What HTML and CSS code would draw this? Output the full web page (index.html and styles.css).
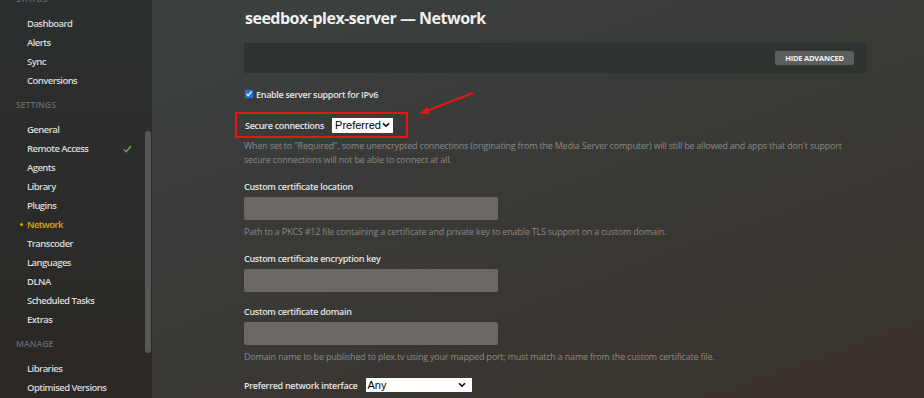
FILE: index.html
```html
<!DOCTYPE html>
<html>
<head>
<meta charset="utf-8">
<link rel="stylesheet" href="styles.css">
</head>
<body>
<div class="app">
  <nav class="sidebar">
    <div class="nav-head first">Status</div>
    <a class="nav-item">Dashboard</a>
    <a class="nav-item">Alerts</a>
    <a class="nav-item">Sync</a>
    <a class="nav-item">Conversions</a>
    <div class="nav-head">Settings</div>
    <a class="nav-item">General</a>
    <a class="nav-item">Remote Access <svg class="check" width="9" height="8" viewBox="0 0 9 8"><path d="M1 4.5 L3.3 6.8 L8 1" fill="none" stroke="#6fae3c" stroke-width="1.4"/></svg></a>
    <a class="nav-item">Agents</a>
    <a class="nav-item">Library</a>
    <a class="nav-item">Plugins</a>
    <a class="nav-item active">Network</a>
    <a class="nav-item">Transcoder</a>
    <a class="nav-item">Languages</a>
    <a class="nav-item">DLNA</a>
    <a class="nav-item">Scheduled Tasks</a>
    <a class="nav-item">Extras</a>
    <div class="nav-head">Manage</div>
    <a class="nav-item">Libraries</a>
    <a class="nav-item">Optimised Versions</a>
    <div class="scrollbar"></div>
  </nav>
  <main class="main">
    <h1 class="title">seedbox-plex-server — Network</h1>
    <div class="toolbar">
      <button class="btn">Hide Advanced</button>
    </div>
    <label class="check-row"><input type="checkbox" checked> Enable server support for IPv6</label>
    <div class="secure-row">
      <span class="label">Secure connections</span>
      <div class="select sel-pref"><span>Preferred</span><svg width="8" height="6" viewBox="0 0 8 6"><path d="M1 1.2 L4 4.2 L7 1.2" fill="none" stroke="#000" stroke-width="1.6"/></svg></div>
    </div>
    <p class="help">When set to "Required", some unencrypted connections (originating from the Media Server computer) will still be allowed and apps that don't support<br>secure connections will not be able to connect at all.</p>
    <div class="field">
      <div class="label">Custom certificate location</div>
      <div class="input"></div>
      <p class="help">Path to a PKCS #12 file containing a certificate and private key to enable TLS support on a custom domain.</p>
    </div>
    <div class="field">
      <div class="label">Custom certificate encryption key</div>
      <div class="input"></div>
    </div>
    <div class="field">
      <div class="label">Custom certificate domain</div>
      <div class="input"></div>
      <p class="help">Domain name to be published to plex.tv using your mapped port; must match a name from the custom certificate file.</p>
    </div>
    <div class="inline-row">
      <span class="label">Preferred network interface</span>
      <div class="select sel-any"><span>Any</span><svg width="8" height="6" viewBox="0 0 8 6"><path d="M1 1.2 L4 4.2 L7 1.2" fill="none" stroke="#000" stroke-width="1.6"/></svg></div>
    </div>
    <svg class="arrow" width="60" height="28" viewBox="0 0 60 28"><line x1="55" y1="2" x2="9" y2="19.8" stroke="#e8141a" stroke-width="2.2"/><path d="M1 23 L11.7 23.1 L8.9 15.7 Z" fill="#e8141a"/></svg>
  </main>
</div>
</body>
</html>
```
FILE: styles.css
```css
* { box-sizing: border-box; }
html, body { margin: 0; padding: 0; }
body {
  width: 924px;
  height: 398px;
  overflow: hidden;
  font-family: "Open Sans", "Liberation Sans", sans-serif;
  background: #383533;
}
.app {
  display: flex;
  height: 398px;
  background: linear-gradient(160deg, #3c4241 0%, #393a37 45%, #3a322b 100%);
}
.sidebar {
  position: relative;
  width: 152px;
  flex: none;
  padding-left: 27px;
  background: linear-gradient(180deg, #2b2f2f 0%, #2b2b29 60%, #2b2724 100%);
  display: flex;
  flex-direction: column;
  overflow: hidden;
}
.nav-head {
  height: 19px;
  line-height: 19px;
  margin: 5px 0 6px -11px;
  font-size: 8.5px;
  font-weight: 600;
  text-transform: uppercase;
  color: #6a6b6a;
  letter-spacing: 0.1px;
}
.nav-head.first { margin-top: -11px; }
.nav-item {
  display: flex;
  align-items: center;
  height: 19px;
  font-size: 9.5px;
  font-weight: 600;
  color: #d9d9d9;
  letter-spacing: -0.55px;
  position: relative;
}
.check { position: absolute; left: 96px; top: 6px; }
.nav-item.active { color: #e5a00d; }
.nav-item.active::before {
  content: "";
  position: absolute;
  left: -7px;
  top: 8px;
  width: 3px;
  height: 3px;
  border-radius: 50%;
  background: #e5a00d;
}
.scrollbar {
  position: absolute;
  left: 145px;
  top: 131px;
  width: 6px;
  height: 222px;
  border-radius: 3px;
  background: #555756;
}
.main {
  position: relative;
  flex: 1;
  padding: 7px 57px 0 92px;
}
.title {
  margin: 0 0 0 1px;
  font-size: 16px;
  line-height: 22px;
  font-weight: 700;
  color: #f0f0f0;
  letter-spacing: -0.5px;
}
.toolbar {
  margin-top: 14px;
  height: 30px;
  background: #303333;
  display: flex;
  justify-content: flex-end;
  align-items: center;
  padding-right: 13px;
}
.btn {
  height: 14px;
  width: 79px;
  padding: 0;
  border: none;
  border-radius: 2px;
  background: #5c5f5f;
  color: #f2f2f2;
  font-family: "Open Sans", "Liberation Sans", sans-serif;
  font-size: 7.5px;
  font-weight: 700;
  text-transform: uppercase;
  letter-spacing: -0.2px;
}
.check-row {
  display: flex;
  align-items: center;
  margin-top: 15px;
  height: 12px;
  font-size: 9px;
  font-weight: 600;
  color: #e4e4e4;
  letter-spacing: -0.3px;
}
.check-row input {
  width: 8px;
  height: 8px;
  margin: 0 3px 0 1px;
  accent-color: #1a73e8;
}
.label {
  font-size: 9px;
  font-weight: 600;
  color: #e4e4e4;
  letter-spacing: -0.3px;
}
.secure-row {
  display: flex;
  align-items: center;
  width: 173px;
  height: 26px;
  margin: 12px 0 0 -9px;
  padding-left: 8px;
  border: 2px solid #e8141a;
}
.secure-row .label { margin-right: 8px; }
.select {
  display: flex;
  align-items: center;
  justify-content: space-between;
  height: 15px;
  background: #fff;
  color: #000;
  font-family: "Liberation Sans", Arial, sans-serif;
  font-size: 11px;
  padding: 0 3px 0 3px;
}
.sel-pref { width: 61px; }
.sel-any { width: 106px; height: 14px; font-size: 11px; padding-left: 2px; padding-right: 6px; }
.help {
  margin: 1px 0 0;
  font-size: 9px;
  line-height: 14px;
  color: #8a8886;
  letter-spacing: -0.2px;
}
.field { margin-top: 13px; }
.field .label { line-height: 14px; }
.field .input {
  margin-top: 3px;
  width: 254px;
  height: 23px;
  border-radius: 2px;
  background: #6a6764;
}
.field .help { margin-top: 5px; }
.inline-row {
  display: flex;
  align-items: center;
  margin-top: 14px;
}
.inline-row .label { margin-right: 8px; }
.arrow {
  position: absolute;
  left: 266px;
  top: 91px;
}
```
